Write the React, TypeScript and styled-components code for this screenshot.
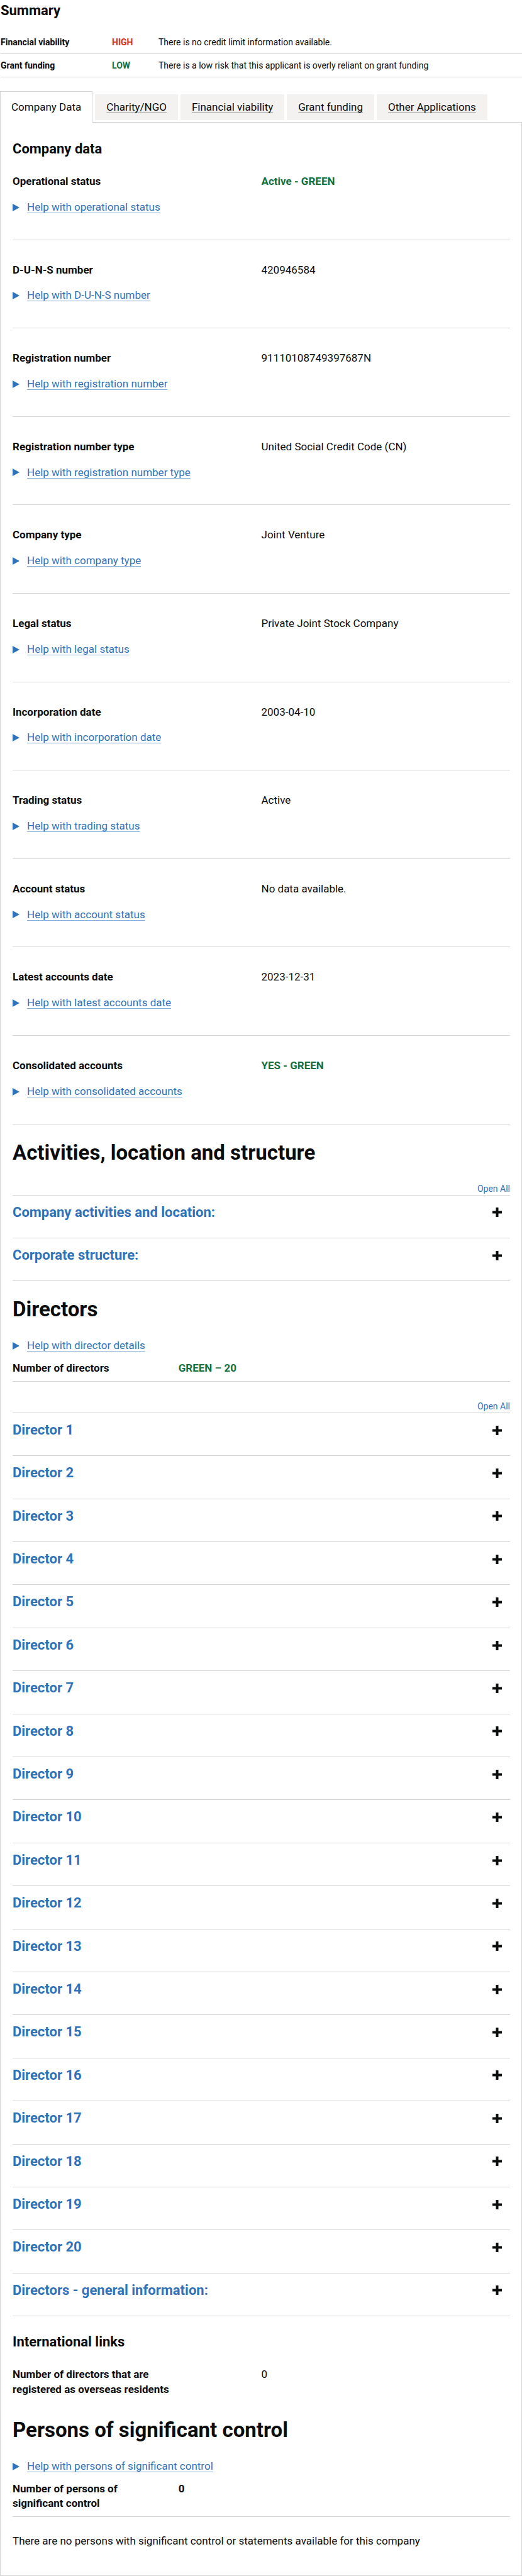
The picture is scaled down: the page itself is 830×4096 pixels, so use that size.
import React, { useState } from "react";
import styled, { createGlobalStyle } from "styled-components";

const ink = "#0b0c0c";
const blue = "#2f72b8";
const line = "#d2d4d5";
const green = "#12703f";
const red = "#d4351c";

const GlobalStyle = createGlobalStyle`
  *, *::before, *::after { box-sizing: border-box; }
  body {
    margin: 0;
    background: #ffffff;
    color: ${ink};
    font-family: Roboto, "Liberation Sans", sans-serif;
    font-size: 17px;
    line-height: 1.4;
  }
  h2, h3, p, dl, dt, dd, ul { margin: 0; padding: 0; }
`;

const HeadingM = styled.h2`
  font-size: 22px;
  line-height: 28px;
  font-weight: 700;
`;

const HeadingL = styled.h2`
  margin-top: 25px;
  font-size: 33px;
  line-height: 40px;
  font-weight: 700;
`;

const SummaryHeader = styled.header`
  padding: 3px 0 0 1px;
`;

const SummaryTable = styled.table`
  width: 100%;
  margin: 18px 0 22px;
  border-collapse: separate;
  border-spacing: 0;
  table-layout: fixed;
  font-size: 14px;
  line-height: 20px;
`;

const SummaryName = styled.th`
  width: 177px;
  padding: 8px 0;
  border-bottom: 1px solid ${line};
  text-align: left;
  font-weight: 700;
`;

const SummaryRating = styled.td<{ $color: string }>`
  width: 74px;
  padding: 8px 0;
  border-bottom: 1px solid ${line};
  color: ${(p) => p.$color};
  font-weight: 700;
`;

const SummaryNote = styled.td`
  padding: 8px 0;
  border-bottom: 1px solid ${line};
`;

const TabList = styled.ul`
  display: flex;
  align-items: flex-start;
  gap: 4px;
  list-style: none;
`;

const TabItem = styled.li<{ $active: boolean }>`
  margin: ${(p) => (p.$active ? "0 0 -1px" : "5px 0 3px")};
  padding: ${(p) => (p.$active ? "13px 17px 13px" : "9px 18px")};
  border: ${(p) => (p.$active ? `1px solid ${line}` : "0")};
  border-bottom: 0;
  background: ${(p) => (p.$active ? "#ffffff" : "#f3f2f1")};
  position: relative;
  line-height: 23px;
`;

const TabLink = styled.a<{ $active: boolean }>`
  color: ${ink};
  text-decoration: ${(p) => (p.$active ? "none" : "underline")};
  text-decoration-color: #6b6c6c;
  text-decoration-thickness: 1px;
  text-decoration-skip-ink: none;
  text-underline-offset: 3px;
`;

const Panel = styled.section`
  padding: 28px 18px 42px 19px;
  border: 1px solid ${line};
`;

const DataList = styled.dl`
  display: flex;
  flex-direction: column;
  gap: 36px;
  margin-top: 26px;
`;

const DataRow = styled.div`
  display: grid;
  grid-template-columns: 1fr 1fr;
  row-gap: 17px;
  padding-bottom: 39px;
  border-bottom: 1px solid ${line};
`;

const PlainRow = styled.div`
  display: grid;
  grid-template-columns: 1fr 1fr;
`;

const CountRow = styled.dl`
  display: grid;
  grid-template-columns: 1fr 2fr;
  margin-top: 12px;
  padding-bottom: 8px;
  border-bottom: 1px solid ${line};
`;

const Term = styled.dt`
  max-width: 290px;
  padding-right: 30px;
  font-weight: 700;
`;

const Value = styled.dd<{ $good?: boolean; $strong?: boolean }>`
  color: ${(p) => (p.$good ? green : ink)};
  font-weight: ${(p) => (p.$good || p.$strong ? 700 : 400)};
`;

const HelpCell = styled.dd`
  grid-column: 1 / -1;
`;

const HelpToggle = styled.summary`
  display: flex;
  align-items: center;
  gap: 12px;
  width: fit-content;
  color: ${blue};
  cursor: pointer;
  list-style: none;

  &::before {
    content: "";
    border-style: solid;
    border-width: 6px 0 6px 11px;
    border-color: transparent transparent transparent ${blue};
  }
`;

const HelpText = styled.span`
  text-decoration: underline;
  text-decoration-color: #7ea9d8;
  text-decoration-thickness: 1px;
  text-decoration-skip-ink: none;
  text-underline-offset: 3px;
`;

const SectionHelp = styled.div`
  margin-top: 26px;
`;

const AccordionBlock = styled.div<{ $gap: number }>`
  display: flex;
  flex-direction: column;
  margin-top: ${(p) => p.$gap}px;
`;

const OpenAll = styled.button`
  align-self: flex-end;
  padding: 0;
  border: 0;
  background: none;
  color: ${blue};
  font: inherit;
  font-size: 14px;
  line-height: 20px;
  cursor: pointer;
`;

const AccordionList = styled.div`
  border-top: 1px solid ${line};
`;

const AccordionHeading = styled.h3`
  border-bottom: 1px solid ${line};
  font-size: 22px;
  line-height: 1.2;
`;

const AccordionButton = styled.button`
  display: flex;
  justify-content: space-between;
  align-items: center;
  width: 100%;
  padding: 14px 13px 27px 0;
  border: 0;
  background: none;
  color: ${blue};
  font: inherit;
  font-weight: 700;
  text-align: left;
  cursor: pointer;
`;

const LinksHeading = styled(HeadingM)`
  margin-top: 27px;
`;

const OverseasList = styled.dl`
  margin: 26px 0 32px;
`;

const Note = styled.p`
  margin-top: 27px;
`;

function PlusIcon({ open }: { open: boolean }) {
  return (
    <svg width="15" height="15" viewBox="0 0 15 15" aria-hidden="true">
      <path d={open ? "M0 7.5H15" : "M0 7.5H15M7.5 0V15"} stroke={ink} strokeWidth="4" />
    </svg>
  );
}

function Help({ topic }: { topic: string }) {
  return (
    <details>
      <HelpToggle>
        <HelpText>Help with {topic}</HelpText>
      </HelpToggle>
    </details>
  );
}

function Accordion({ titles, gap }: { titles: string[]; gap: number }) {
  const [open, setOpen] = useState<string[]>([]);
  const allOpen = open.length === titles.length;
  const toggle = (title: string) =>
    setOpen(open.includes(title) ? open.filter((t) => t !== title) : [...open, title]);
  return (
    <AccordionBlock $gap={gap}>
      <OpenAll type="button" onClick={() => setOpen(allOpen ? [] : titles)}>
        {allOpen ? "Close All" : "Open All"}
      </OpenAll>
      <AccordionList>
        {titles.map((title) => (
          <AccordionHeading key={title}>
            <AccordionButton
              type="button"
              aria-expanded={open.includes(title)}
              onClick={() => toggle(title)}
            >
              {title}
              <PlusIcon open={open.includes(title)} />
            </AccordionButton>
          </AccordionHeading>
        ))}
      </AccordionList>
    </AccordionBlock>
  );
}

const ratings = [
  { name: "Financial viability", rating: "HIGH", color: red, note: "There is no credit limit information available." },
  { name: "Grant funding", rating: "LOW", color: green, note: "There is a low risk that this applicant is overly reliant on grant funding" },
];

const tabs = ["Company Data", "Charity/NGO", "Financial viability", "Grant funding", "Other Applications"];

const companyData = [
  { term: "Operational status", value: "Active - GREEN", help: "operational status", good: true },
  { term: "D-U-N-S number", value: "420946584", help: "D-U-N-S number" },
  { term: "Registration number", value: "91110108749397687N", help: "registration number" },
  { term: "Registration number type", value: "United Social Credit Code (CN)", help: "registration number type" },
  { term: "Company type", value: "Joint Venture", help: "company type" },
  { term: "Legal status", value: "Private Joint Stock Company", help: "legal status" },
  { term: "Incorporation date", value: "2003-04-10", help: "incorporation date" },
  { term: "Trading status", value: "Active", help: "trading status" },
  { term: "Account status", value: "No data available.", help: "account status" },
  { term: "Latest accounts date", value: "2023-12-31", help: "latest accounts date" },
  { term: "Consolidated accounts", value: "YES - GREEN", help: "consolidated accounts", good: true },
];

const directors = [
  ...Array.from({ length: 20 }, (_, i) => `Director ${i + 1}`),
  "Directors - general information:",
];

export default function App() {
  return (
    <>
      <GlobalStyle />
      <SummaryHeader>
        <HeadingM>Summary</HeadingM>
        <SummaryTable>
          <tbody>
            {ratings.map((r) => (
              <tr key={r.name}>
                <SummaryName scope="row">{r.name}</SummaryName>
                <SummaryRating $color={r.color}>{r.rating}</SummaryRating>
                <SummaryNote>{r.note}</SummaryNote>
              </tr>
            ))}
          </tbody>
        </SummaryTable>
      </SummaryHeader>
      <nav>
        <TabList>
          {tabs.map((tab, i) => (
            <TabItem key={tab} $active={i === 0}>
              <TabLink href={i === 0 ? "#company-data" : `#tab-${i}`} $active={i === 0}>{tab}</TabLink>
            </TabItem>
          ))}
        </TabList>
      </nav>
      <Panel id="company-data">
        <HeadingM>Company data</HeadingM>
        <DataList>
          {companyData.map((d) => (
            <DataRow key={d.term}>
              <Term>{d.term}</Term>
              <Value $good={d.good}>{d.value}</Value>
              <HelpCell><Help topic={d.help} /></HelpCell>
            </DataRow>
          ))}
        </DataList>

        <HeadingL>Activities, location and structure</HeadingL>
        <Accordion titles={["Company activities and location:", "Corporate structure:"]} gap={27} />

        <HeadingL>Directors</HeadingL>
        <SectionHelp><Help topic="director details" /></SectionHelp>
        <CountRow>
          <Term>Number of directors</Term>
          <Value $good>GREEN – 20</Value>
        </CountRow>
        <Accordion titles={directors} gap={29} />

        <LinksHeading as="h3">International links</LinksHeading>
        <OverseasList>
          <PlainRow>
            <Term>Number of directors that are registered as overseas residents</Term>
            <Value>0</Value>
          </PlainRow>
        </OverseasList>

        <HeadingL>Persons of significant control</HeadingL>
        <SectionHelp><Help topic="persons of significant control" /></SectionHelp>
        <CountRow>
          <Term>Number of persons of significant control</Term>
          <Value $strong>0</Value>
        </CountRow>
        <Note>There are no persons with significant control or statements available for this company</Note>
      </Panel>
    </>
  );
}
